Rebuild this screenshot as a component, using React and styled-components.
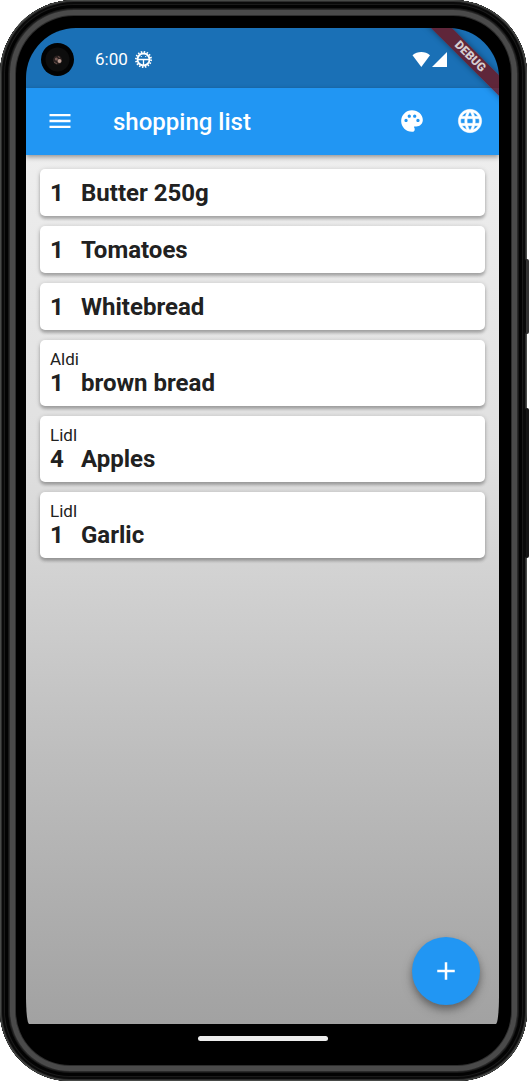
import React from "react";
import styled, { createGlobalStyle } from "styled-components";
import { MdAdd, MdLanguage, MdMenu, MdPalette } from "react-icons/md";

const GlobalStyle = createGlobalStyle`
  *, *::before, *::after { box-sizing: border-box; }
  body {
    margin: 0;
    background: #fff;
    font-family: Roboto, "Liberation Sans", sans-serif;
    color: #212121;
  }
`;

const Phone = styled.div`
  position: relative;
  display: flex;
  flex-direction: column;
  min-height: 100vh;
  margin-right: 2px;
  padding: 28px 28px 0 26px;
  border-radius: 74px 74px 70px 70px;
  background: #000;
  box-shadow:
    inset 0 0 0 1px #484a48,
    inset 0 0 0 2px #2c2c2c,
    inset 0 0 0 4px #0a0a0a,
    inset 0 0 0 5px #1a1a1a,
    inset 0 0 0 8px #030303,
    inset 0 0 0 9px #181818,
    inset 0 0 0 10px #2a2a2a,
    inset 0 0 0 15px #4a4a4a,
    inset 0 0 0 16px #2e2e2e;
`;

const SideKey = styled.div`
  position: absolute;
  right: -2px;
  top: ${(p) => p.$top}px;
  width: 4px;
  height: ${(p) => p.$height}px;
  border-radius: 2px;
  border-left: 1px solid #0a0a0a;
  background: ${(p) => p.$color};
`;

const Screen = styled.div`
  position: relative;
  flex: 1;
  display: flex;
  flex-direction: column;
  overflow: hidden;
  border-radius: 50px 50px 3px 3px / 50px 50px 28px 28px;
`;

const StatusBar = styled.div`
  display: flex;
  align-items: center;
  gap: 7px;
  height: 60px;
  padding: 2px 52px 0 15px;
  background: #1a70b6;
  color: #fff;
`;

const Camera = styled.svg`
  width: 33px;
  height: 33px;
  margin-right: 14px;
`;

const Clock = styled.time`
  font-size: 17px;
  line-height: 20px;
`;

const Signals = styled.div`
  display: flex;
  gap: 2px;
  margin-left: auto;
`;

const Glyph = styled.svg`
  width: ${(p) => p.$width}px;
  height: ${(p) => p.$height}px;
`;

const DebugBanner = styled.div`
  position: absolute;
  top: 21px;
  right: -31px;
  z-index: 2;
  width: 120px;
  height: 15px;
  transform: rotate(45deg);
  background: rgba(117, 14, 18, 0.76);
  box-shadow: 0 0 6px rgba(0, 0, 0, 0.4);
  color: #d5cdd0;
  font-size: 12px;
  font-weight: 900;
  line-height: 15px;
  text-align: center;
`;

const AppBar = styled.header`
  position: relative;
  z-index: 1;
  display: flex;
  align-items: center;
  height: 67px;
  background: #2196f3;
  box-shadow: 0 2px 5px rgba(0, 0, 0, 0.4);
  color: #fff;
`;

const IconButton = styled.button`
  display: flex;
  align-items: center;
  justify-content: center;
  width: ${(p) => (p.$wide ? 68 : 58)}px;
  height: 100%;
  padding: 0 0 1px;
  border: 0;
  background: none;
  color: inherit;
  font-size: ${(p) => (p.$small ? 26 : 28)}px;
  cursor: pointer;

  path:last-child {
    stroke: currentColor;
    stroke-width: ${(p) => (p.$bold ? 0.4 : 0)};
  }
`;

const Title = styled.h1`
  flex: 1;
  margin: 0;
  padding-left: 19px;
  font-size: 24px;
  font-weight: 500;
  line-height: 28px;
`;

const Content = styled.main`
  flex: 1;
  padding: 14px;
  background: linear-gradient(#eee, #e0e0e0 33%, #bdbdbd 67%, #9e9e9e) top / 100% 104% no-repeat;
`;

const List = styled.ul`
  display: flex;
  flex-direction: column;
  gap: 10px;
  margin: 0;
  padding: 0;
  list-style: none;
`;

const Card = styled.li`
  padding: 10px 10px 8px;
  border-radius: 5px;
  background: #fff;
  box-shadow:
    0 3px 3px rgba(0, 0, 0, 0.2),
    0 1px 5px rgba(0, 0, 0, 0.2);
`;

const Store = styled.div`
  font-size: 17px;
  line-height: 19px;
`;

const Item = styled.div`
  display: grid;
  grid-template-columns: 31px 1fr;
  font-size: 24px;
  font-weight: 700;
  line-height: 29px;
`;

const AddButton = styled.button`
  position: absolute;
  right: 19px;
  bottom: 19px;
  display: flex;
  align-items: center;
  justify-content: center;
  width: 68px;
  height: 68px;
  padding: 0;
  border: 0;
  border-radius: 50%;
  background: #2196f3;
  box-shadow:
    0 4px 6px rgba(0, 0, 0, 0.24),
    0 5px 12px rgba(0, 0, 0, 0.22);
  color: #fff;
  font-size: 30px;
  cursor: pointer;
`;

const NavBar = styled.div`
  display: flex;
  justify-content: center;
  height: 57px;
  padding-top: 12px;
`;

const HomeHandle = styled.div`
  width: 130px;
  height: 5px;
  border-radius: 3px;
  background: #ececec;
`;

const items = [
  { count: 1, name: "Butter 250g" },
  { count: 1, name: "Tomatoes" },
  { count: 1, name: "Whitebread" },
  { count: 1, name: "brown bread", store: "Aldi" },
  { count: 4, name: "Apples", store: "Lidl" },
  { count: 1, name: "Garlic", store: "Lidl" },
];

function CameraHole() {
  return (
    <Camera viewBox="0 0 33 33" aria-hidden="true">
      <circle cx="16.5" cy="16.5" r="16.5" fill="#020202" />
      <circle cx="16.5" cy="16.5" r="12" fill="#0d0d0d" />
      <circle cx="16.5" cy="17" r="4.5" fill="#29201f" />
      <circle cx="15.3" cy="16" r="1.5" fill="#7b5e58" />
      <circle cx="18.5" cy="18" r="2" fill="#b99b91" />
      <path d="M13 19l3 2M17 13.500l2 1" stroke="#68514c" strokeWidth="1" />
    </Camera>
  );
}

function BugGlyph() {
  return (
    <Glyph $width={17} $height={17} viewBox="0 0 17 17" fill="none" stroke="#fff" aria-hidden="true">
      <circle cx="8.5" cy="8.5" r="7.600" strokeWidth="1.800" strokeDasharray="1.500 1.484" />
      <circle cx="8.5" cy="8.5" r="6" strokeWidth="1.800" />
      <path d="M3 8.500h11M8.500 9v5" strokeWidth="1.300" />
      <path d="M5.800 5.500h1M10.200 5.500h1" strokeWidth="1" />
    </Glyph>
  );
}

export default function App() {
  return (
    <>
      <GlobalStyle />
      <Phone>
        <SideKey $top={259} $height={75} $color="#333" />
        <SideKey $top={408} $height={150} $color="#151515" />
        <Screen>
          <StatusBar>
            <CameraHole />
            <Clock>6:00</Clock>
            <BugGlyph />
            <Signals>
              <Glyph $width={18} $height={15} viewBox="0 0 18 15" fill="#fff" aria-hidden="true">
                <path d="M0.500 3.200C3 1 6 0 9.300 0s6.200 1 8.700 3.200L9.300 15z" />
              </Glyph>
              <Glyph $width={15} $height={15} viewBox="0 0 15 15" fill="#fff" aria-hidden="true">
                <path d="M15 0v15H0z" />
              </Glyph>
            </Signals>
          </StatusBar>
          <DebugBanner>DEBUG</DebugBanner>
          <AppBar>
            <IconButton $wide aria-label="Menu">
              <MdMenu />
            </IconButton>
            <Title>shopping list</Title>
            <IconButton $small aria-label="Theme">
              <MdPalette />
            </IconButton>
            <IconButton $bold aria-label="Language">
              <MdLanguage />
            </IconButton>
          </AppBar>
          <Content>
            <List>
              {items.map((item) => (
                <Card key={item.name}>
                  {item.store && <Store>{item.store}</Store>}
                  <Item>
                    <span>{item.count}</span>
                    <span>{item.name}</span>
                  </Item>
                </Card>
              ))}
            </List>
          </Content>
          <AddButton aria-label="Add item">
            <MdAdd />
          </AddButton>
        </Screen>
        <NavBar>
          <HomeHandle />
        </NavBar>
      </Phone>
    </>
  );
}
